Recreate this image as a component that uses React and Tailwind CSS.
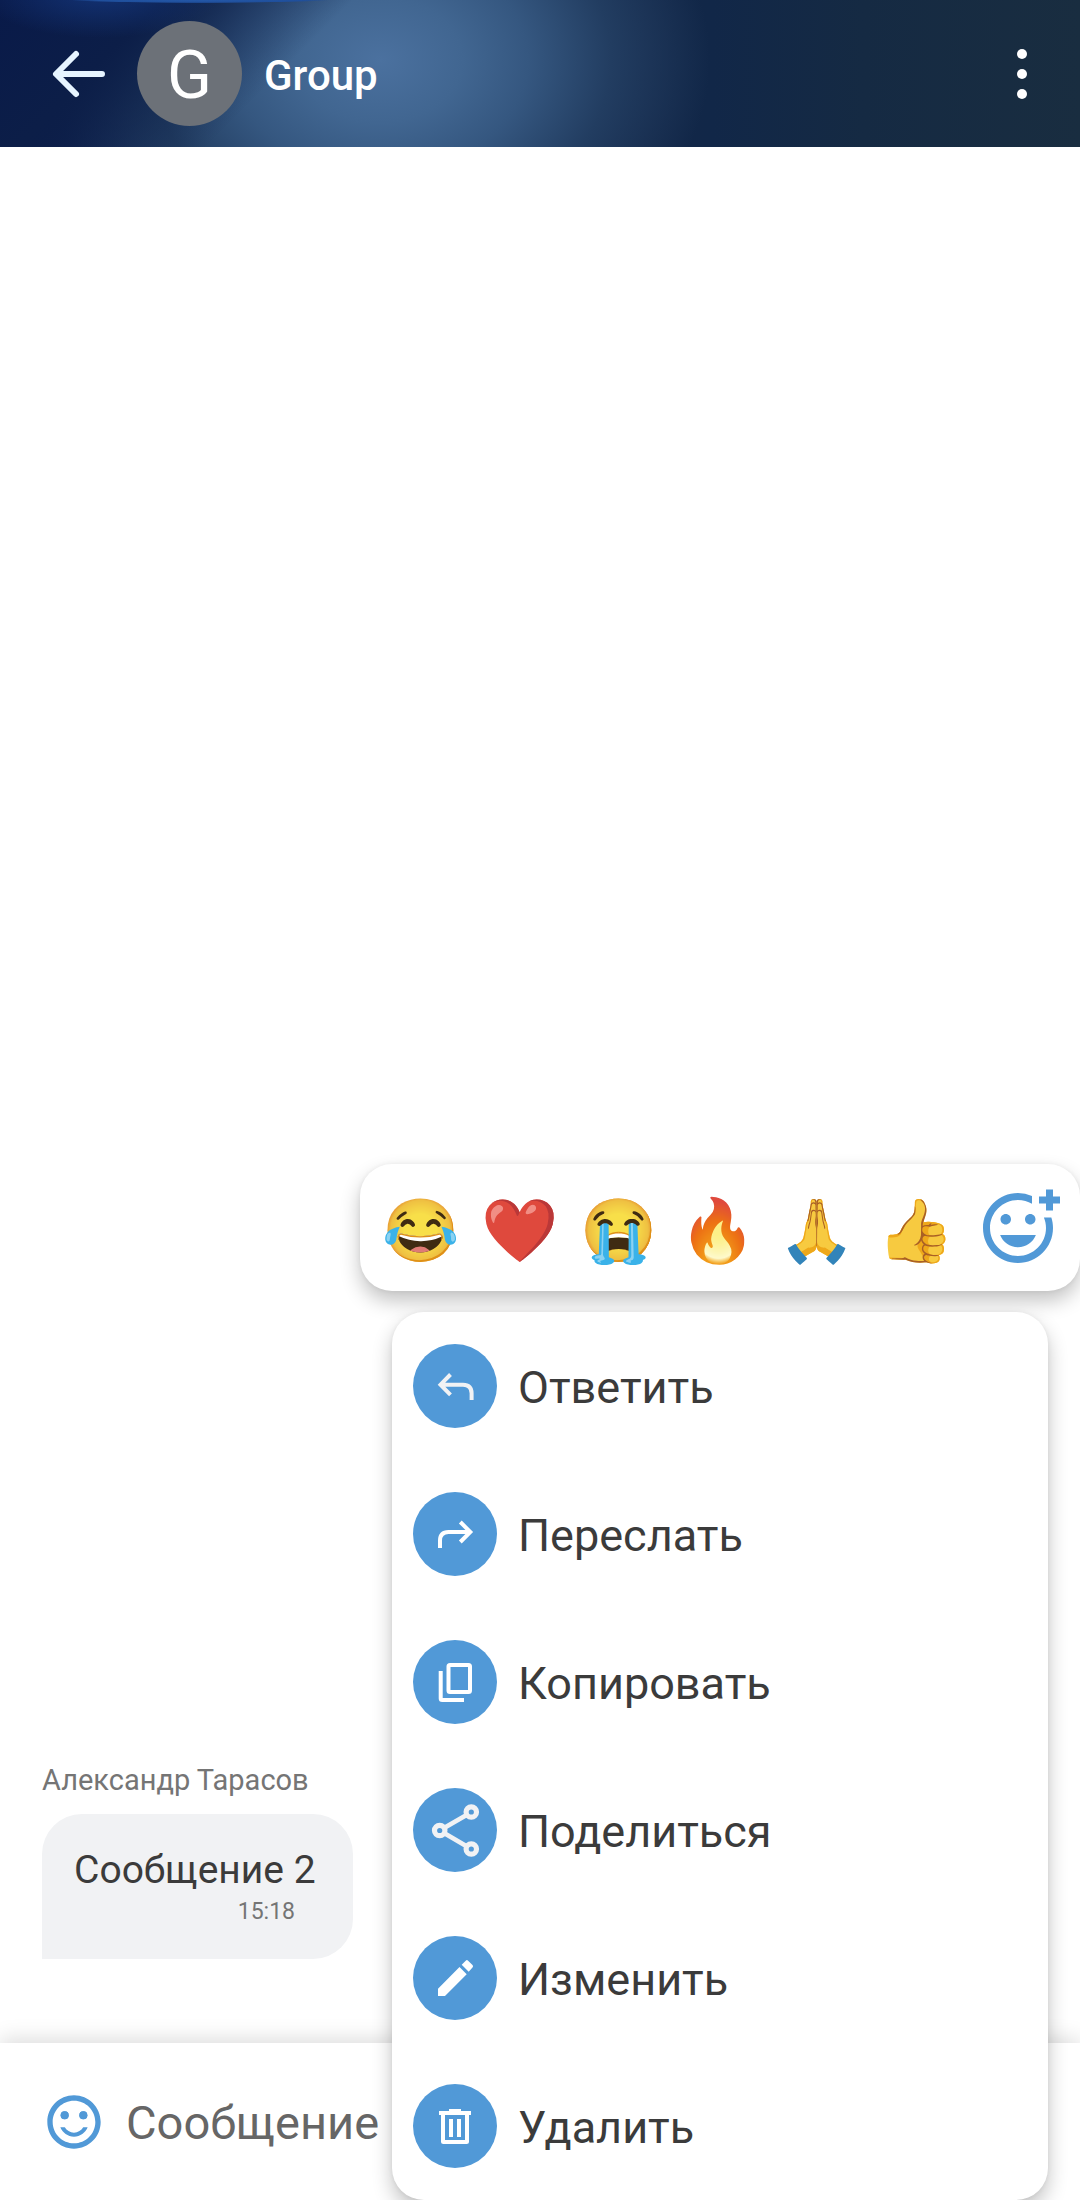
import React from "react";
import { MdOutlineAddReaction, MdSentimentSatisfiedAlt } from "react-icons/md";

const reactions = [
  { label: "Смех до слёз", glyph: "😂" },
  { label: "Сердце", glyph: "❤️" },
  { label: "Плач", glyph: "😭" },
  { label: "Огонь", glyph: "🔥" },
  { label: "Спасибо", glyph: "🙏" },
  { label: "Нравится", glyph: "👍" },
];

function ReplyIcon() {
  return (
    <svg viewBox="0 0 84 84" className="size-full" fill="none" stroke="#f1f2f4" strokeWidth="4">
      <path d="M37.5 30.5 27.5 40.7l10 10.2M28 40.7h22q8.6 0 8.6 8.6V56" />
    </svg>
  );
}

function ForwardIcon() {
  return (
    <svg viewBox="0 0 84 84" className="size-full" fill="none" stroke="#fff" strokeWidth="4">
      <path d="M47.3 30 57.3 40l-10 10M57 40H35.5q-8.5 0-8.5 8.6V56" />
    </svg>
  );
}

function CopyIcon() {
  return (
    <svg viewBox="0 0 84 84" className="size-full" fill="none" stroke="#fff" strokeWidth="4">
      <rect x="35.5" y="25" width="21.5" height="27" rx="1.5" />
      <path d="M27.7 31v27.5q0 1.5 1.5 1.5H51" />
    </svg>
  );
}

function ShareIcon() {
  return (
    <svg viewBox="0 0 84 84" className="size-full" fill="none" stroke="#f1f2f4" strokeWidth="5.2">
      <path strokeWidth="4.6" d="M54 26.7 31 40M31 45l23 13.5" />
      <circle cx="58.3" cy="24" r="5.2" />
      <circle cx="26.7" cy="42.5" r="5.2" />
      <circle cx="58.3" cy="61" r="5.2" />
    </svg>
  );
}

function EditIcon() {
  return (
    <svg viewBox="0 0 84 84" className="size-full" fill="#fff">
      <path d="M25 60v-7.2L46.5 31l7.2 7.2L32 60zM48.7 28.7l4-4q1.2-1.2 2.4 0l4.4 4.4q1.2 1.2 0 2.4l-3.8 4.2z" />
    </svg>
  );
}

function DeleteIcon() {
  return (
    <svg viewBox="0 0 84 84" className="size-full" fill="#fff">
      <path fillRule="evenodd" d="M36 25h12v2h10v4h-2v26.5q0 2.5-2.5 2.5h-23q-2.5 0-2.5-2.5V31h-2v-4h10zM32 31v25h20V31z" />
      <path d="M36 35h4v18h-4zM44 35h4v18h-4z" />
    </svg>
  );
}

const actions = [
  { label: "Ответить", Icon: ReplyIcon },
  { label: "Переслать", Icon: ForwardIcon },
  { label: "Копировать", Icon: CopyIcon },
  { label: "Поделиться", Icon: ShareIcon },
  { label: "Изменить", Icon: EditIcon },
  { label: "Удалить", Icon: DeleteIcon },
];

function Header() {
  return (
    <header className="flex h-[147px] items-center bg-[radial-gradient(ellipse_130px_3px_at_200px_0px,#2458a8_0%,#1f4f9c_80%,transparent_100%),radial-gradient(ellipse_120px_44px_at_100px_-6px,#163b86b3_0%,transparent_100%),linear-gradient(135deg,#091a49_0px,#0c1e48_115px,#0c1e4800_250px),radial-gradient(ellipse_330px_250px_at_380px_60px,#4b719f_0%,#416691_25%,#355780_45%,#223d61_70%,transparent_100%),radial-gradient(ellipse_240px_130px_at_260px_170px,#31527b_0%,transparent_100%),linear-gradient(90deg,#081949_0%,#0d1e47_12%,#132748_60%,#112748_66%,#152a43_80%,#192d40_100%)] pr-6 pl-[42px] text-white">
      <button type="button" aria-label="Назад" className="flex size-[74px] items-center">
        <svg viewBox="0 0 74 74" className="size-full" fill="none" stroke="#e6f4ff" strokeWidth="6" strokeLinecap="round" strokeLinejoin="round">
          <path d="M60 37H15M34 17 14 37l20 20" />
        </svg>
      </button>
      <div className="ml-[21px] flex size-[105px] items-center justify-center rounded-full bg-[#6c7178] pt-1 text-[66px] leading-none">G</div>
      <h1 className="ml-[22px] grow pt-1 text-[42px] font-medium">Group</h1>
      <button type="button" aria-label="Меню" className="flex size-[70px] items-center justify-center">
        <svg viewBox="0 0 70 70" className="size-full" fill="#fff">
          <circle cx="36" cy="15" r="5" />
          <circle cx="36" cy="35" r="5" />
          <circle cx="36" cy="55" r="5" />
        </svg>
      </button>
    </header>
  );
}

export default function App() {
  return (
    <div className="relative flex min-h-screen flex-col overflow-hidden bg-white font-['Roboto',sans-serif] text-[#3b3b3b]">
      <Header />
      <main className="flex grow flex-col items-start justify-end px-[42px] pb-[84px]">
        <p className="text-[29px] leading-9 text-[#757575]">Александр Тарасов</p>
        <div className="mt-4 flex h-[145px] w-[311px] flex-col rounded-[40px] rounded-bl-none bg-[#f1f2f4] pt-8 pl-8">
          <p className="text-[39px] leading-[48px]">Сообщение 2</p>
          <time className="mr-[58px] self-end text-[23px] leading-9 text-[#757575]">15:18</time>
        </div>
      </main>
      <form className="flex h-[157px] items-center gap-5 bg-white pl-[42px] shadow-[0_-4px_20px_rgba(0,0,0,0.14)]">
        <button type="button" aria-label="Эмодзи" className="size-16 text-[#5199d7]">
          <MdSentimentSatisfiedAlt className="size-full" />
        </button>
        <input aria-label="Сообщение" placeholder="Сообщение" className="min-w-0 grow pt-1 text-[47px] outline-none placeholder:text-[#666]" />
      </form>

      <div className="absolute right-0 bottom-0 flex max-w-full flex-col items-end gap-[21px]">
        <div className="flex h-[127px] w-[720px] max-w-full items-center justify-between rounded-[32px] bg-white pr-5 pl-[22px] shadow-[0_10px_20px_rgba(0,0,0,0.24),0_0_5px_rgba(0,0,0,0.06)]">
          {reactions.map((r) => (
            <button key={r.label} type="button" aria-label={r.label} className="flex size-[76px] items-center justify-center pt-1.5 text-[62px] leading-none saturate-[.85]">{r.glyph}</button>
          ))}
          <button type="button" aria-label="Добавить реакцию" className="size-[84px] text-[#5199d7]">
            <MdOutlineAddReaction className="size-full" />
          </button>
        </div>
        <div role="menu" className="mr-8 w-[656px] max-w-full rounded-[32px] bg-white shadow-[0_10px_20px_rgba(0,0,0,0.24),0_0_5px_rgba(0,0,0,0.06)]">
          {actions.map(({ label, Icon }) => (
            <button key={label} type="button" role="menuitem" className="flex h-[148px] w-full items-center gap-[21px] px-[21px] text-left text-[45px]">
              <span className="size-[84px] shrink-0 rounded-full bg-[#5199d7]">
                <Icon />
              </span>
              <span className="pt-1">{label}</span>
            </button>
          ))}
        </div>
      </div>
    </div>
  );
}
